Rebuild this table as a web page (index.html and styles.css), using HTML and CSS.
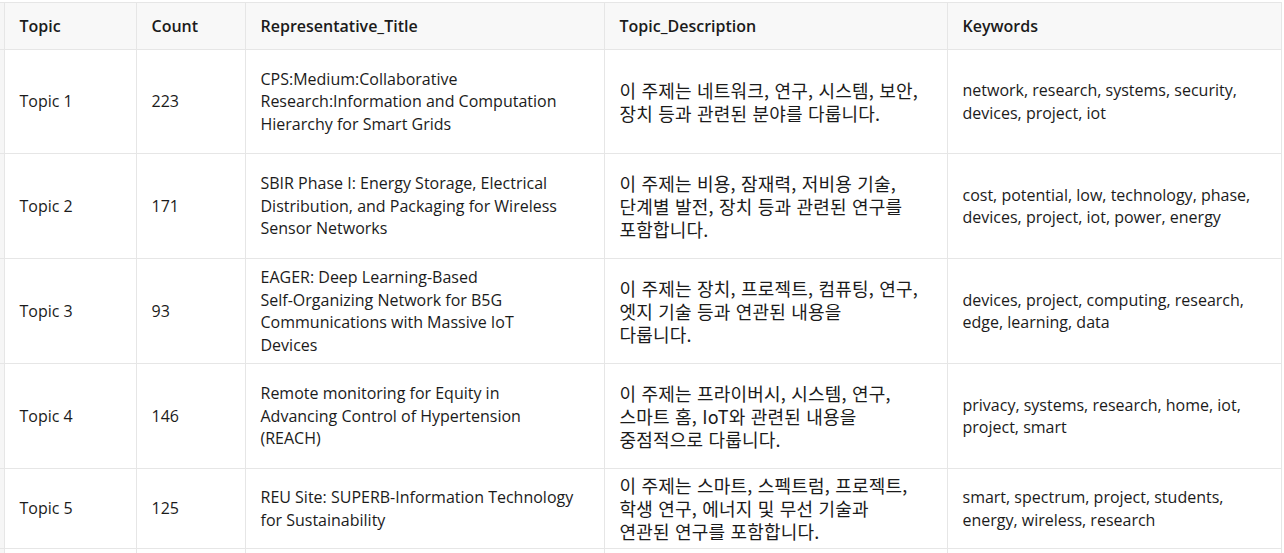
FILE: index.html
```html
<!DOCTYPE html>
<html lang="ko">
<head>
<meta charset="utf-8">
<title>Topics</title>
<link rel="stylesheet" href="styles.css">
</head>
<body>
<div class="frame">
<table class="topics">
  <colgroup>
    <col class="c-edge">
    <col class="c-topic">
    <col class="c-count">
    <col class="c-title">
    <col class="c-desc">
    <col class="c-kw">
  </colgroup>
  <thead>
    <tr class="head">
      <th class="edge"></th>
      <th>Topic</th>
      <th>Count</th>
      <th>Representative_Title</th>
      <th>Topic_Description</th>
      <th>Keywords</th>
    </tr>
  </thead>
  <tbody>
    <tr class="row first">
      <td class="edge"></td>
      <td>Topic 1</td>
      <td>223</td>
      <td>CPS:Medium:Collaborative<br>Research:Information and Computation<br>Hierarchy for Smart Grids</td>
      <td class="ko">이 주제는 네트워크, 연구, 시스템, 보안,<br>장치 등과 관련된 분야를 다룹니다.</td>
      <td>network, research, systems, security, devices, project, iot</td>
    </tr>
    <tr class="row">
      <td class="edge"></td>
      <td>Topic 2</td>
      <td>171</td>
      <td>SBIR Phase I: Energy Storage, Electrical<br>Distribution, and Packaging for Wireless<br>Sensor Networks</td>
      <td class="ko">이 주제는 비용, 잠재력, 저비용 기술,<br>단계별 발전, 장치 등과 관련된 연구를<br>포함합니다.</td>
      <td>cost, potential, low, technology, phase, devices, project, iot, power, energy</td>
    </tr>
    <tr class="row">
      <td class="edge"></td>
      <td>Topic 3</td>
      <td>93</td>
      <td>EAGER: Deep Learning-Based<br>Self-Organizing Network for B5G<br>Communications with Massive IoT<br>Devices</td>
      <td class="ko">이 주제는 장치, 프로젝트, 컴퓨팅, 연구,<br>엣지 기술 등과 연관된 내용을<br>다룹니다.</td>
      <td>devices, project, computing, research, edge, learning, data</td>
    </tr>
    <tr class="row">
      <td class="edge"></td>
      <td>Topic 4</td>
      <td>146</td>
      <td>Remote monitoring for Equity in<br>Advancing Control of Hypertension<br>(REACH)</td>
      <td class="ko">이 주제는 프라이버시, 시스템, 연구,<br>스마트 홈, IoT와 관련된 내용을<br>중점적으로 다룹니다.</td>
      <td>privacy, systems, research, home, iot, project, smart</td>
    </tr>
    <tr class="row short">
      <td class="edge"></td>
      <td>Topic 5</td>
      <td>125</td>
      <td>REU Site: SUPERB-Information Technology<br>for Sustainability</td>
      <td class="ko">이 주제는 스마트, 스펙트럼, 프로젝트,<br>학생 연구, 에너지 및 무선 기술과<br>연관된 연구를 포함합니다.</td>
      <td>smart, spectrum, project, students, energy, wireless, research</td>
    </tr>
    <tr class="row">
      <td class="edge"></td>
      <td></td>
      <td></td>
      <td></td>
      <td></td>
      <td></td>
    </tr>
  </tbody>
</table>
</div>
</body>
</html>
```

FILE: styles.css
```css
html, body {
  margin: 0;
  padding: 0;
  background: #ffffff;
  overflow: hidden;
}

.frame {
  padding-top: 2px;
  width: 1284px;
}

.topics {
  border-collapse: collapse;
  table-layout: fixed;
  width: 1281px;
  font-family: "Segoe UI", "Open Sans", "Noto Sans CJK KR", sans-serif;
  font-size: 16px;
  line-height: 22.5px;
  color: #1b1b1b;
}

.c-edge { width: 4px; }
.c-topic { width: 132px; }
.c-count { width: 109px; }
.c-title { width: 359px; }
.c-desc { width: 343px; }
.c-kw { width: 334px; }

.topics th,
.topics td {
  border: 1px solid #e6e6e6;
  padding: 0 15px;
  text-align: left;
  vertical-align: middle;
  overflow: hidden;
  white-space: normal;
}

.topics .edge {
  padding: 0;
  border-left: none;
  background: #f6f6f6;
}

.head th {
  height: 46px;
  background: #f8f8f8;
  font-weight: 600;
}

.row td {
  height: 104px;
}

.row.first td {
  height: 103px;
}

.row.short td {
  height: 79px;
}

.ko {
  font-family: "Noto Sans CJK KR", sans-serif;
  font-size: 18px;
  letter-spacing: 0.2px;
  line-height: 23px;
  word-break: keep-all;
}
```
